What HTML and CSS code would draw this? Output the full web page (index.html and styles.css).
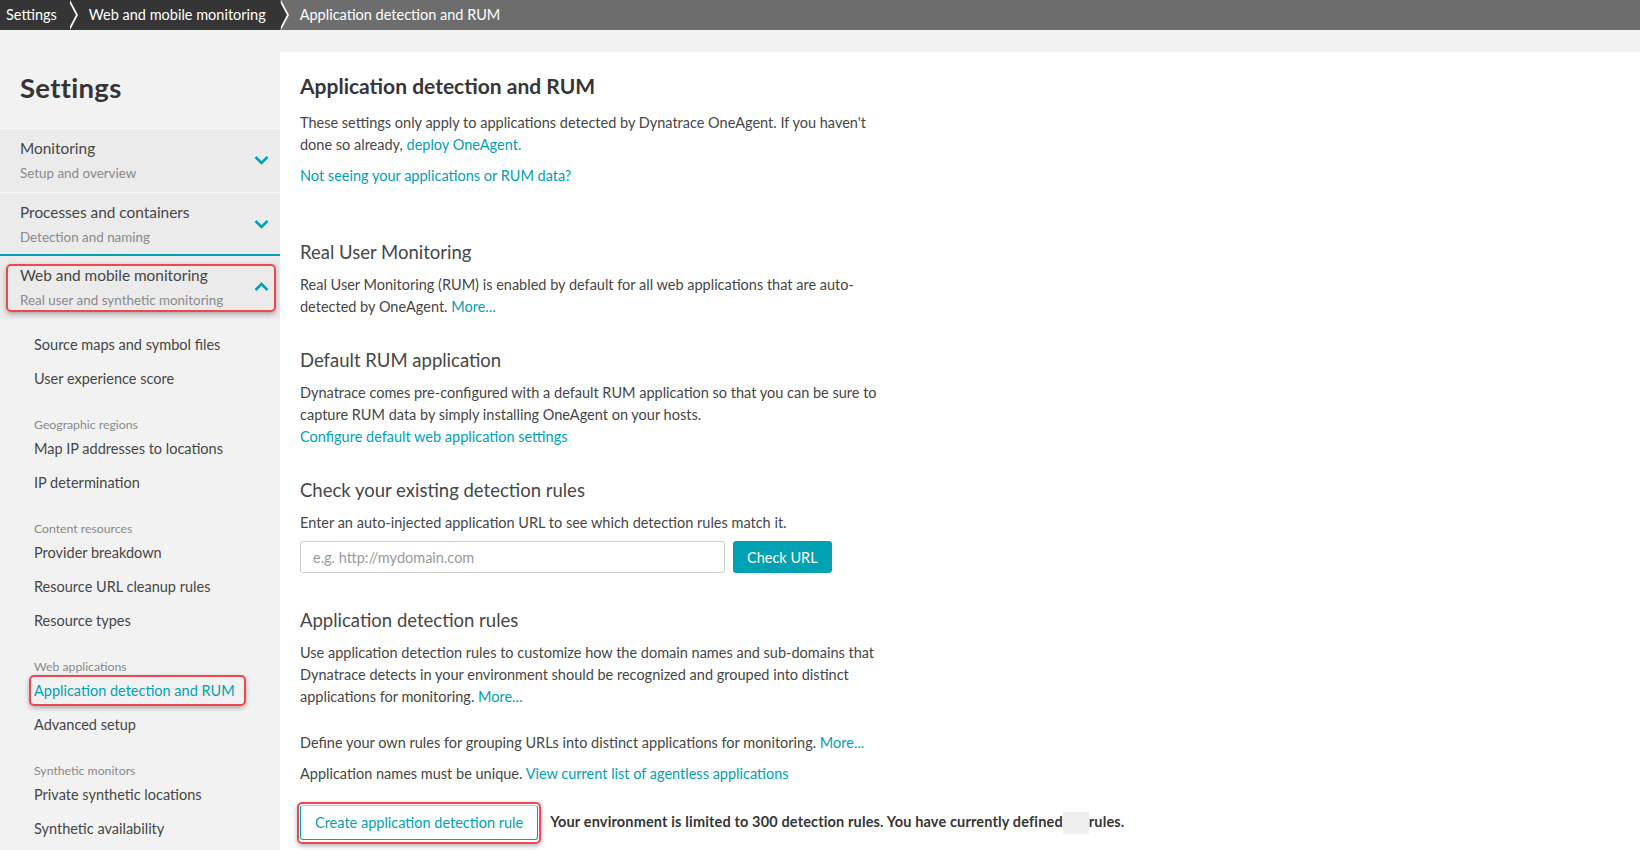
FILE: index.html
```html
<!DOCTYPE html>
<html lang="en">
<head>
  <meta charset="UTF-8" />
  <title>Application detection and RUM</title>
  <link rel="stylesheet" href="styles.css">
</head>
<body>
  <div class="breadcrumbs">
    <div class="crumb crumb-dark">Settings</div>
    <div class="crumb crumb-dark">Web and mobile monitoring</div>
    <div class="crumb crumb-current">Application detection and RUM</div>
  </div>

  <div class="layout">
    <aside class="sidebar">
      <h1 class="sidebar-title">Settings</h1>

      <div class="section">
        <div class="section-text">
          <div class="section-name">Monitoring</div>
          <div class="section-sub">Setup and overview</div>
        </div>
        <svg class="chevron" viewBox="0 0 16 10"><polyline points="2,2 8,8 14,2" /></svg>
      </div>
      <div class="section section-last">
        <div class="section-text">
          <div class="section-name">Processes and containers</div>
          <div class="section-sub">Detection and naming</div>
        </div>
        <svg class="chevron" viewBox="0 0 16 10"><polyline points="2,2 8,8 14,2" /></svg>
      </div>
      <div class="section section-open highlight">
        <div class="section-text">
          <div class="section-name">Web and mobile monitoring</div>
          <div class="section-sub">Real user and synthetic monitoring</div>
        </div>
        <svg class="chevron" viewBox="0 0 16 10"><polyline points="2,8 8,2 14,8" /></svg>
      </div>

      <ul class="nav">
        <li class="nav-item">Source maps and symbol files</li>
        <li class="nav-item">User experience score</li>
        <li class="nav-group">Geographic regions</li>
        <li class="nav-item">Map IP addresses to locations</li>
        <li class="nav-item">IP determination</li>
        <li class="nav-group">Content resources</li>
        <li class="nav-item">Provider breakdown</li>
        <li class="nav-item">Resource URL cleanup rules</li>
        <li class="nav-item">Resource types</li>
        <li class="nav-group">Web applications</li>
        <li class="nav-item"><span class="nav-active highlight">Application detection and RUM</span></li>
        <li class="nav-item">Advanced setup</li>
        <li class="nav-group">Synthetic monitors</li>
        <li class="nav-item">Private synthetic locations</li>
        <li class="nav-item">Synthetic availability</li>
      </ul>
    </aside>

    <main class="content">
      <h2 class="page-title">Application detection and RUM</h2>
      <p>These settings only apply to applications detected by Dynatrace OneAgent. If you haven't done so already, <a href="#">deploy OneAgent.</a></p>
      <p class="tight"><a href="#">Not seeing your applications or RUM data?</a></p>

      <h3 class="first-section">Real User Monitoring</h3>
      <p>Real User Monitoring (RUM) is enabled by default for all web applications that are auto-detected by OneAgent. <a href="#">More...</a></p>

      <h3>Default RUM application</h3>
      <p>Dynatrace comes pre-configured with a default RUM application so that you can be sure to capture RUM data by simply installing OneAgent on your hosts.<br><a href="#">Configure default web application settings</a></p>

      <h3>Check your existing detection rules</h3>
      <p class="tight">Enter an auto-injected application URL to see which detection rules match it.</p>
      <div class="check-row">
        <input class="url-input" type="text" placeholder="e.g. http://mydomain.com">
        <button class="btn-primary">Check URL</button>
      </div>

      <h3>Application detection rules</h3>
      <p>Use application detection rules to customize how the domain names and sub-domains that Dynatrace detects in your environment should be recognized and grouped into distinct applications for monitoring. <a href="#">More...</a></p>
      <p class="spaced">Define your own rules for grouping URLs into distinct applications for monitoring. <a href="#">More...</a></p>
      <p class="tight">Application names must be unique. <a href="#">View current list of agentless applications</a></p>

      <div class="create-row">
        <span class="highlight create-wrap"><button class="btn-secondary">Create application detection rule</button></span>
        <span class="limit-text">Your environment is limited to 300 detection rules. You have currently defined<span class="blank"></span>rules.</span>
      </div>
    </main>
  </div>
</body>
</html>
```

FILE: styles.css
```css
* {
  box-sizing: border-box;
}

body {
  margin: 0;
  background: #f2f2f2;
  font-family: Lato, "Open Sans", sans-serif;
  font-size: 14.5px;
  color: #454646;
  overflow: hidden;
}

a {
  color: #00a1b2;
  text-decoration: none;
}

/* top breadcrumb bar */
.breadcrumbs {
  display: flex;
  height: 30px;
  background: #6d6d6d;
}

.crumb {
  position: relative;
  display: flex;
  align-items: center;
  padding: 0 12px 2px 20px;
  color: #fff;
  font-size: 14.5px;
}

.crumb:first-child {
  padding-left: 6px;
}

.crumb-dark {
  background: #353535;
}

.crumb-dark::after {
  content: "";
  position: absolute;
  right: -7px;
  top: 0;
  width: 0;
  height: 0;
  border-top: 15px solid transparent;
  border-bottom: 15px solid transparent;
  border-left: 8px solid #353535;
  z-index: 1;
}

.crumb-dark::before {
  content: "";
  position: absolute;
  right: -9px;
  top: 0;
  width: 0;
  height: 0;
  border-top: 15px solid transparent;
  border-bottom: 15px solid transparent;
  border-left: 8px solid #fff;
  z-index: 1;
}

.crumb-dark + .crumb-dark {
  padding-left: 20px;
  padding-right: 14px;
}

.crumb-current {
  padding-left: 20px;
}

/* layout */
.layout {
  display: flex;
  height: 820px;
}

.sidebar {
  width: 280px;
  flex-shrink: 0;
  background: #f2f2f2;
}

.sidebar-title {
  margin: 0;
  padding: 40px 20px 22px;
  font-size: 27.5px;
  line-height: 36px;
  font-weight: 700;
  color: #353535;
  letter-spacing: 0.3px;
}

.section {
  display: flex;
  align-items: center;
  justify-content: space-between;
  height: 64px;
  padding: 0 10px 2px 20px;
  background: #ebebeb;
  border-top: 1px solid #f7f7f7;
}

.section-last {
  border-bottom: 2px solid #00a1b2;
  padding-bottom: 0;
}

.section-open {
  border-top: none;
  height: 63px;
}

.section-name {
  font-size: 15.4px;
  line-height: 20px;
  color: #454646;
}

.section-sub {
  margin-top: 6px;
  font-size: 13.4px;
  line-height: 18px;
  color: #898989;
}

.chevron {
  width: 17px;
  height: 10px;
  fill: none;
  stroke: #00a1b2;
  stroke-width: 2.5;
}

.highlight {
  position: relative;
}

.highlight::after {
  content: "";
  position: absolute;
  border: 2px solid #ef4650;
  border-radius: 5px;
  box-shadow: 0 2px 5px rgba(0, 0, 0, 0.3);
  pointer-events: none;
}

.section.highlight::after {
  left: 6px;
  right: 4px;
  top: 8px;
  bottom: 7px;
}

.nav {
  list-style: none;
  margin: 0;
  padding: 9px 0 0 34px;
}

.nav-item {
  height: 34px;
  line-height: 34px;
  color: #454646;
}

.nav-group {
  margin-top: 22px;
  height: 14px;
  line-height: 14px;
  font-size: 12.25px;
  color: #898989;
}

.nav-active {
  color: #00a1b2;
}

.nav-active.highlight::after {
  left: -5px;
  right: -11px;
  top: -7px;
  bottom: -7px;
}

/* main content */
.content {
  flex: 1;
  margin-top: 22px;
  background: #fff;
  padding: 21px 20px 0;
}

.content p {
  max-width: 590px;
  margin: 0 0 9px;
  line-height: 22px;
}

.content p.tight {
  margin-bottom: 0;
}

.content p.spaced {
  margin-top: 24px;
}

.page-title {
  margin: 0 0 14px;
  font-size: 21px;
  font-weight: 700;
  color: #353535;
}

h3 {
  margin: 31px 0 11px;
  font-size: 18.5px;
  font-weight: 400;
  color: #454646;
}

h3.first-section {
  margin-top: 54px;
}

.check-row {
  display: flex;
  gap: 8px;
  margin: 7px 0 36px;
}

.url-input {
  width: 425px;
  height: 32px;
  border: 1px solid #cccccc;
  border-radius: 3px;
  padding: 0 12px;
  font-family: inherit;
  font-size: 14.5px;
  color: #454646;
}

.url-input::placeholder {
  color: #9a9a9a;
}

.btn-primary {
  height: 32px;
  padding: 0 14px;
  border: none;
  border-radius: 3px;
  background: #00a1b2;
  color: #fff;
  font-family: inherit;
  font-size: 14.5px;
}

.create-row {
  display: flex;
  align-items: center;
  gap: 12px;
  margin-top: 20px;
}

.create-wrap::after {
  left: -3px;
  right: -3px;
  top: -3px;
  bottom: -4px;
}

.btn-secondary {
  display: block;
  height: 35px;
  padding: 0 14px;
  border: 1px solid #00a1b2;
  border-top-color: #c8c8c8;
  border-radius: 3px;
  background: #fff;
  color: #00a1b2;
  font-family: inherit;
  font-size: 14.5px;
}

.limit-text {
  font-weight: 700;
  color: #353535;
  letter-spacing: 0.15px;
}

.blank {
  display: inline-block;
  width: 26px;
  height: 22px;
  vertical-align: middle;
  background: #efefef;
}
```
